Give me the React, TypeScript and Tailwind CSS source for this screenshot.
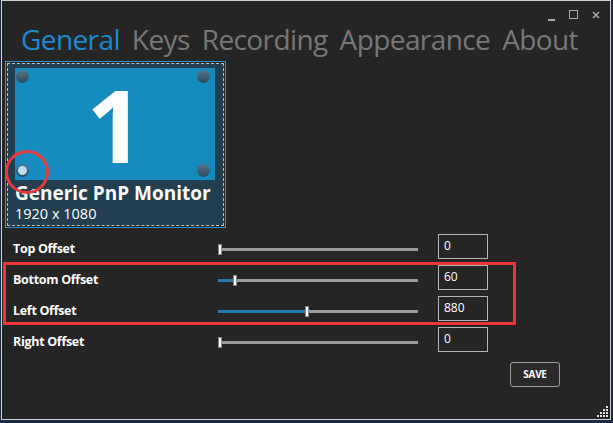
import React from 'react';

const tabs = ['General', 'Keys', 'Recording', 'Appearance', 'About'];

type Row = { label: string; value: string; pct: number };

const rows: Row[] = [
  { label: 'Top Offset', value: '0', pct: 0 },
  { label: 'Bottom Offset', value: '60', pct: 7.5 },
  { label: 'Left Offset', value: '880', pct: 43.5 },
  { label: 'Right Offset', value: '0', pct: 0 },
];

function Screw({ lit = false }: { lit?: boolean }) {
  return (
    <div className="h-[13px] w-[13px] rounded-full bg-gradient-to-b from-[#56758a] to-[#2c4a5e] p-[2px]">
      {lit && <div className="h-full w-full rounded-full bg-[#b9def2]" />}
    </div>
  );
}

function Slider({ pct }: { pct: number }) {
  return (
    <div className="relative flex h-[12px] w-[200px] items-center">
      <div className="flex h-[3px] w-full">
        <div className="h-full bg-[#1f7fb4]" style={{ width: `${pct}%` }} />
        <div className="h-full flex-1 bg-[#9b9b9b]" />
      </div>
      <div
        className="absolute top-0 h-[11px] w-[4px] border border-[#8a8a8a] bg-white"
        style={{ left: `${pct}%` }}
      />
    </div>
  );
}

export default function App() {
  return (
    <div className="h-[423px] w-[613px] overflow-hidden bg-[#1b2a46] font-['Open_Sans','Noto_Sans',sans-serif]">
      <div className="relative ml-px flex h-[420px] w-[610px] flex-col border border-[#cfcfcf] bg-[#252525]">
        {/* title bar buttons */}
        <div className="flex h-[20px] items-start justify-end gap-[14px] pr-[10px] pt-[9px] text-[#a8a8a8]">
          <div className="mt-[9px] h-[2px] w-[7px] bg-[#a8a8a8]" />
          <div className="h-[9px] w-[9px] border-[1.5px] border-[#a8a8a8]" />
          <svg width="8" height="8" viewBox="0 0 8 8" className="mt-[1px]">
            <path d="M1 1L7 7M7 1L1 7" stroke="#a8a8a8" strokeWidth="1.6" />
          </svg>
        </div>

        {/* tabs */}
        <div className="flex gap-[12px] pl-[19px] text-[28px] leading-[36px] tracking-[-0.6px] text-[#777777]">
          {tabs.map((t, i) => (
            <span key={t} className={i === 0 ? 'text-[#1d8ad0]' : ''}>
              {t}
            </span>
          ))}
        </div>

        {/* monitor card */}
        <div className="ml-[3px] mt-[4px] h-[167px] w-[221px] border border-[#2e94d4] p-px">
          <div className="flex h-full w-full flex-col border border-dashed border-[#b9c3c9] bg-[#223e4f] px-[7px] pt-[4px]">
            <div className="relative flex h-[112px] w-[200px] items-center justify-center bg-[#168bbf]">
              <span className="text-[100px] font-bold leading-[100px] text-white">1</span>
              <div className="absolute left-[1px] top-[2px]"><Screw /></div>
              <div className="absolute right-[5px] top-[2px]"><Screw /></div>
              <div className="absolute bottom-[3px] left-[1px]"><Screw lit /></div>
              <div className="absolute bottom-[3px] right-[5px]"><Screw /></div>
            </div>
            <div className="mt-[2px] whitespace-nowrap text-[19px] font-bold leading-[22px] text-white">
              Generic PnP Monitor
            </div>
            <div className="mt-[1px] text-[14.5px] leading-[17px] text-white">1920 x 1080</div>
          </div>
        </div>

        {/* offsets */}
        <div className="mt-[6px] flex flex-col">
          {rows.map((r) => (
            <div key={r.label} className="flex h-[31px] items-center">
              <div className="w-[216px] pl-[11px] text-[12.5px] font-bold tracking-[-0.3px] text-white">
                {r.label}
              </div>
              <Slider pct={r.pct} />
              <div className="mb-[7px] ml-[20px] flex h-[25px] w-[50px] items-center border border-[#b4b4b4] bg-[#252525] pl-[5px] text-[12px] text-white">
                {r.value}
              </div>
            </div>
          ))}
        </div>

        <div className="flex justify-end pr-[50px] pt-[4px]">
          <button className="h-[25px] w-[50px] rounded-[3px] border border-[#9c9c9c] bg-[#2a2a2a] text-[10px] font-bold tracking-[-0.3px] text-white">
            SAVE
          </button>
        </div>

        {/* resize grip */}
        <div className="absolute bottom-[2px] right-[2px] grid grid-cols-4 gap-[1px]">
          {[0, 0, 0, 1, 0, 0, 1, 1, 0, 1, 1, 1, 1, 1, 1, 1].map((d, i) => (
            <div key={i} className={`h-[2px] w-[2px] ${d ? 'bg-[#e0e0e0]' : ''}`} />
          ))}
        </div>

        {/* annotations */}
        <div className="pointer-events-none absolute left-[3px] top-[149px] h-[44px] w-[44px] rounded-full border-[3px] border-[#e63b3b]" />
        <div className="pointer-events-none absolute left-[1px] top-[261px] h-[63px] w-[513px] border-[3px] border-[#ee3535]" />
      </div>
    </div>
  );
}
